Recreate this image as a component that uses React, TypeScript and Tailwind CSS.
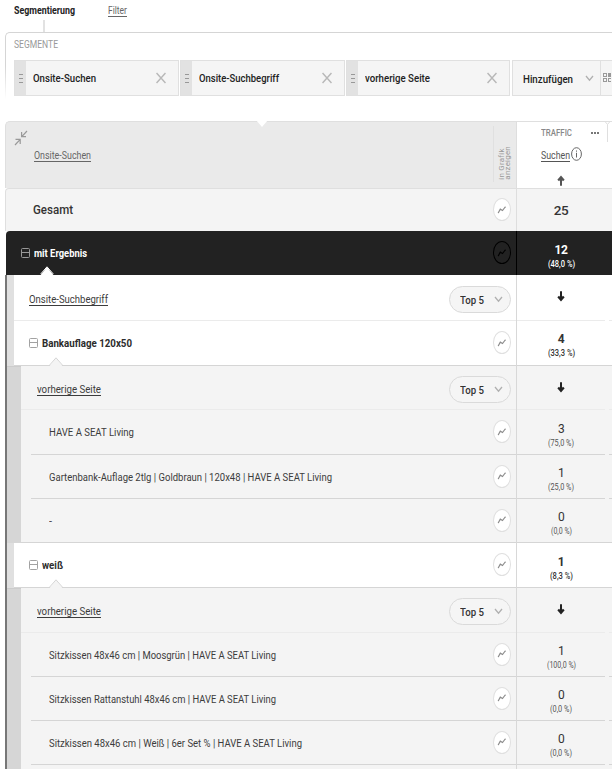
import { useLayoutEffect, useRef, type ReactNode } from 'react';

// Condenses or widens a label horizontally so that it occupies exactly `w` pixels.
function Fit({ w, className = '', line = false, children }: { w: number; className?: string; line?: boolean; children: ReactNode }) {
  const ref = useRef<HTMLSpanElement>(null);
  useLayoutEffect(() => {
    const el = ref.current;
    if (!el) return;
    el.style.transform = 'none';
    el.style.transform = `scaleX(${w / el.getBoundingClientRect().width})`;
  }, [w]);
  return (
    <span className={`flex shrink-0 ${line ? 'border-b border-current' : ''} ${className}`} style={{ width: w }}>
      <span ref={ref} className="block w-max shrink-0 origin-left whitespace-pre">{children}</span>
    </span>
  );
}

function ChartButton({ dark = false }: { dark?: boolean }) {
  return (
    <span className={`mb-px flex h-[23px] w-[18px] shrink-0 items-center justify-center rounded-[50%] border ${dark ? 'border-black text-black' : 'border-[#e0e0e0] bg-white text-[#8c8c8c]'}`}>
      <svg width="10" height="10" viewBox="0 0 10 10" fill="none" stroke="currentColor" strokeWidth="1.2">
        <path d="M1.2 8 L3.3 4.2 L5.5 5.5 L8.2 2" />
        <circle cx="1.4" cy="7.6" r=".55" fill="currentColor" stroke="none" />
        <circle cx="8.3" cy="2" r=".6" fill="currentColor" stroke="none" />
      </svg>
    </span>
  );
}

function Chevron() {
  return (
    <svg width="9" height="7" viewBox="0 0 9 7" fill="none" stroke="#b0b0b0" strokeWidth="1.3" className="shrink-0">
      <path d="M1 1 L4.5 5.2 L8 1" />
    </svg>
  );
}

function TopSelect({ shift = '' }: { shift?: string }) {
  return (
    <span className={`flex h-[27px] w-[62px] shrink-0 items-center justify-between rounded-full border border-[#dadada] bg-[#f5f5f5] pl-[10px] pr-[7px] text-[11.5px] text-[#333] ${shift}`}>
      <Fit w={24} className="pt-px font-medium">Top 5</Fit>
      <Chevron />
    </span>
  );
}

function Arrow({ up = false, color = '#222' }: { up?: boolean; color?: string }) {
  return (
    <svg width="8" height="11" viewBox="0 0 8 11" fill="none" stroke={color} strokeWidth="2" className={up ? 'rotate-180' : ''}>
      <path d="M4 .3 V9" />
      <path d="M1.2 5.6 L4 8.8 L6.8 5.6" strokeWidth="2.3" />
    </svg>
  );
}

function Toggle({ light = false }: { light?: boolean }) {
  return (
    <span className={`mb-px flex h-[10px] w-[9px] shrink-0 flex-col rounded-[1.5px] border ${light ? 'border-[#989898]' : 'border-[#a2a2a2]'}`}>
      <span className={`mt-[3px] h-px ${light ? 'bg-[#989898]' : 'bg-[#a2a2a2]'}`} />
    </span>
  );
}

function Notch({ className, fill, stroke }: { className: string; fill: string; stroke: string }) {
  return (
    <svg width="14" height="9" viewBox="0 0 14 9" className={`absolute ${className}`}>
      <path d="M1 8.5 L7 1 L13 8.5 V9 H1 Z" fill={fill} />
      <path d="M.5 8.2 L7 .8 L13.5 8.2" fill="none" stroke={stroke} />
    </svg>
  );
}

function Segment({ label, w, width }: { label: string; w: number; width: string }) {
  return (
    <div className={`flex h-9 shrink-0 ${width} border border-[#e0e0e0] bg-[#f5f5f5]`}>
      <div className="flex w-[11px] shrink-0 flex-col items-center justify-center gap-[3px] bg-[#e2e2e2]">
        <span className="h-px w-1 bg-[#989898]" />
        <span className="h-px w-1 bg-[#989898]" />
        <span className="h-px w-1 bg-[#989898]" />
      </div>
      <div className="flex flex-1 items-center justify-between pl-[7px] pr-[12px]">
        <Fit w={w} className="font-medium text-[#222]">{label}</Fit>
        <svg width="10" height="12" viewBox="0 0 10 12" stroke="#b8b8b8" strokeWidth="1.5">
          <path d="M.5 1 L9.5 11 M9.5 1 L.5 11" />
        </svg>
      </div>
    </div>
  );
}

type RowData = {
  kind: 'head' | 'group' | 'item';
  h: string;
  label: string;
  w: number;
  value?: string;
  percent?: string;
  pw?: number;
  shift?: string;
  top?: string;
  last?: boolean;
};

function Values({ value, percent, pw = 22, bold, top = 'pt-[11px]' }: { value?: string; percent?: string; pw?: number; bold?: boolean; top?: string }) {
  return (
    <div className={`flex h-full w-[88px] flex-col items-center ${top} ${bold ? 'font-bold' : ''}`}>
      <span className="block text-[12px] leading-[14px] tracking-[-0.5px]">{value}</span>
      <Fit w={pw} className={`text-[9px] leading-[14px] ${bold ? 'font-medium' : 'text-[#555]'}`}>{percent}</Fit>
    </div>
  );
}

function Row({ row, level }: { row: RowData; level: 1 | 2 }) {
  const { kind, last } = row;
  const indent = kind !== 'item' ? (level === 1 ? 'pl-[15px]' : 'pl-[16px]') : last ? 'pl-[28px]' : 'pl-[18px]';
  return (
    <div className={`relative flex ${row.h} ${level === 1 ? 'bg-white' : 'bg-[#f4f4f4]'}`}>
      <div className={`flex flex-1 ${kind === 'item' && !last ? 'pl-[10px]' : ''}`}>
        <div className={`flex flex-1 items-center border-b pr-[5px] ${indent} ${kind === 'head' ? 'border-[#ebebeb]' : 'border-[#d5d5d5]'}`}>
          {kind === 'group' && <><Toggle /><span className="w-[4px]" /></>}
          <Fit w={row.w} line={kind === 'head'} className={kind === 'head' ? 'mt-[3px] leading-[12px] text-[#3c3c3c]' : kind === 'group' ? 'mb-px font-bold text-[#2c2c2c]' : 'pb-px pt-px text-[#3c3c3c]'}>{row.label}</Fit>
          <span className="flex-1" />
          {kind === 'head' ? <TopSelect shift={row.shift} /> : <ChartButton />}
        </div>
      </div>
      <div className="w-px bg-[#d8d8d8]" />
      <div className={`flex w-[88px] shrink-0 justify-center border-b text-[#333] ${kind === 'head' ? 'border-[#ebebeb]' : 'border-[#d5d5d5]'}`}>
        {kind === 'head'
          ? <span className="pt-[16px]"><Arrow /></span>
          : <Values value={row.value} percent={row.percent} pw={row.pw} bold={kind === 'group'} top={row.top} />}
      </div>
      <div className={`w-[4px] ${kind === 'group' || last ? 'border-b border-[#d5d5d5]' : ''}`} />
      <div className={`w-[3px] border-b ${kind === 'head' ? 'border-[#ebebeb]' : 'border-[#d5d5d5]'}`} />
      {kind === 'group' && <Notch className="bottom-0 left-[35px]" fill="#f4f4f4" stroke="#d5d5d5" />}
    </div>
  );
}

const outer1: RowData[] = [
  { kind: 'head', h: 'h-[46px]', label: 'Onsite-Suchbegriff', w: 79, shift: 'mt-[4px]' },
  { kind: 'group', h: 'h-[45px]', label: 'Bankauflage 120x50', w: 90, value: '4', percent: '(33,3 %)', pw: 27 },
];
const inner1: RowData[] = [
  { kind: 'head', h: 'h-[44px]', label: 'vorherige Seite', w: 64, shift: 'mt-[4px]' },
  { kind: 'item', h: 'h-[45px]', label: 'HAVE A SEAT Living', w: 85, value: '3', percent: '(75,0 %)', pw: 26, top: 'pt-[12px]' },
  { kind: 'item', h: 'h-[44px]', label: 'Gartenbank-Auflage 2tlg | Goldbraun | 120x48 | HAVE A SEAT Living', w: 283, value: '1', percent: '(25,0 %)', pw: 26 },
  { kind: 'item', h: 'h-[44px]', label: '-', w: 3, value: '0', percent: '(0,0 %)', pw: 21, last: true },
];
const outer2: RowData[] = [
  { kind: 'group', h: 'h-[45px]', label: 'weiß', w: 21, value: '1', percent: '(8,3 %)', pw: 23, top: 'pt-[12px]' },
];
const inner2: RowData[] = [
  { kind: 'head', h: 'h-[45px]', label: 'vorherige Seite', w: 64, shift: 'mt-[2px]' },
  { kind: 'item', h: 'h-[44px]', label: 'Sitzkissen 48x46 cm | Moosgrün | HAVE A SEAT Living', w: 227, value: '1', percent: '(100,0 %)', pw: 29 },
  { kind: 'item', h: 'h-[44px]', label: 'Sitzkissen Rattanstuhl 48x46 cm | HAVE A SEAT Living', w: 227, value: '0', percent: '(0,0 %)', pw: 22 },
  { kind: 'item', h: 'h-[44px]', label: 'Sitzkissen 48x46 cm | Weiß | 6er Set % | HAVE A SEAT Living', w: 253, value: '0', percent: '(0,0 %)', pw: 22 },
];

function Group({ rows, level, tail = false }: { rows: RowData[]; level: 1 | 2; tail?: boolean }) {
  return (
    <div className="flex">
      <div className={level === 1 ? 'w-[7px] shrink-0 bg-[#e0e0e0]' : 'w-[14px] shrink-0 border-t border-[#cccccc] bg-[#d6d6d6]'} />
      <div className="flex-1">
        {rows.map((r, i) => <Row key={i} row={r} level={level} />)}
        {tail && (
          <div className="flex h-1 bg-[#f4f4f4]">
            <div className="flex-1" />
            <div className="mr-[95px] w-px bg-[#d8d8d8]" />
          </div>
        )}
      </div>
    </div>
  );
}

export default function App() {
  return (
    <div className="h-[769px] w-[612px] overflow-hidden bg-white font-['Roboto',sans-serif] text-[11.5px] leading-[14px] text-[#333]">
      <nav className="flex h-5 items-start gap-[33px] pl-[14px] pt-[3px]">
        <Fit w={61} className="font-bold text-[#222]">Segmentierung</Fit>
        <Fit w={19} line className="mt-px leading-[12px] text-[#666]">Filter</Fit>
      </nav>
      <div className="ml-[43px] h-3 w-[2px] bg-[#e2e2e2]" />
      <section className="relative ml-[5px] h-[89px] rounded-tl-[5px] border-l border-t border-[#d5d5d5] pl-2 pt-[5px]">
        <Fit w={44} className="text-[10.5px] text-[#999]">SEGMENTE</Fit>
        <div className="absolute bottom-0 left-[-1px] h-[55px] w-px bg-linear-to-b from-transparent to-white to-60%" />
        <div className="mt-2 flex w-max">
          <Segment label="Onsite-Suchen" w={63} width="mr-[1px] w-[165px]" />
          <Segment label="Onsite-Suchbegriff" w={80} width="mr-[1px] w-[165px]" />
          <Segment label="vorherige Seite" w={65} width="mr-[2px] w-[164px]" />
          <div className="flex h-9 w-[101px] border border-[#e0e0e0] bg-[#f5f5f5]">
            <div className="flex w-[88px] items-center justify-between border-r border-[#e0e0e0] pl-[10px] pr-[6px]">
              <Fit w={50} className="pt-px font-medium text-[#222]">Hinzufügen</Fit>
              <Chevron />
            </div>
            <svg width="10" height="34" viewBox="0 0 10 34" fill="none" stroke="#999">
              <rect x="2.5" y="12.5" width="3" height="3" />
              <rect x="7" y="12" width="4" height="4" fill="#999" stroke="none" />
              <rect x="2.5" y="17.5" width="3" height="3" />
              <rect x="7.5" y="17.5" width="3" height="3" />
            </svg>
          </div>
        </div>
      </section>
      <main className="ml-[5px]">
        <header className="relative flex h-[67px] rounded-tl-[5px] border-l border-t border-[#dfdfdf] bg-[#eaeaea]">
          <svg width="12" height="8" viewBox="0 0 12 8" className="absolute left-[250px] top-[-2px]"><path d="M0 0 H12 L6 7 Z" fill="white" /></svg>
          <div className="flex flex-1 pl-2 pt-2">
            <svg width="14" height="16" viewBox="0 0 14 16" fill="none" stroke="#999" strokeWidth="1.2">
              <path d="M13 1 L8 6.3 M7.6 2 V6.7 H12 M1 15 L5.8 9.8 M1.5 9.4 H6.2 V14" />
            </svg>
            <div className="ml-[6px] pt-[19px]"><Fit w={57} line className="leading-[12px] text-[#666]">Onsite-Suchen</Fit></div>
            <div className="flex-1" />
            <div className="-mt-1 flex h-[56px] w-[23px] items-end border-l border-[#e0e0e0] pb-[2px] pl-[5px]">
              <div className="w-[12px] rotate-180 text-[8px] leading-[6px] tracking-[0.2px] text-[#999] [writing-mode:vertical-rl]">in Grafik<br />anzeigen</div>
            </div>
          </div>
          <div className="flex w-[96px] border-l border-[#dedede] bg-white">
            <div className="flex w-[88px] flex-col items-center pt-1">
              <div className="relative flex w-full justify-center">
                <Fit w={31} className="-ml-[10px] text-[9.5px] font-medium text-[#888]">TRAFFIC</Fit>
                <span className="absolute right-[6px] top-[6px] flex gap-px"><i className="h-[2px] w-[2px] bg-[#777]" /><i className="h-[2px] w-[2px] bg-[#777]" /><i className="h-[2px] w-[2px] bg-[#777]" /></span>
              </div>
              <div className="mt-[7px] flex items-start gap-[1px]">
                <Fit w={29} line className="mt-[2px] leading-[12px] text-[#555]">Suchen</Fit>
                <svg width="11" height="14" viewBox="0 0 11 14" fill="none" stroke="#666"><ellipse cx="5.5" cy="7" rx="4.9" ry="6.3" /><path d="M5.5 5.8 V10.5 M5.5 3.5 V4.7" /></svg>
              </div>
              <span className="mt-[13px]"><Arrow up color="#555" /></span>
            </div>
            <svg width="7" height="22" viewBox="0 0 7 22" fill="none" stroke="#dfdfdf" className="-mt-px"><path d="M0 .5 L2.5 3.5 V21 M2.5 3.5 L5 .5" /></svg>
          </div>
        </header>
        <div className="flex h-[43px] rounded-tl-[4px] border-l border-t border-[#dfdfdf] bg-[#f4f4f4]">
          <div className="flex flex-1 items-center justify-between pl-[27px] pr-[5px]">
            <Fit w={40} className="mb-px text-[13px] font-medium">Gesamt</Fit><ChartButton />
          </div>
          <div className="flex w-[96px] items-center border-l border-[#dedede]"><span className="mb-px w-[88px] text-center text-[13.5px] font-medium tracking-[-0.4px]">25</span></div>
        </div>
        <div className="relative ml-px flex h-[44px] rounded-tl-[4px] bg-[#222] text-white">
          <div className="flex flex-1 items-center pl-[15px] pr-[5px]">
            <Toggle light /><Fit w={53} className="mb-px ml-[4px] font-bold">mit Ergebnis</Fit>
            <span className="flex-1" /><ChartButton dark />
          </div>
          <div className="w-[96px] border-l border-black"><Values value="12" percent="(48,0 %)" pw={27} bold top="pt-[12px]" /></div>
          <Notch className="bottom-0 left-[34px]" fill="white" stroke="white" />
        </div>
        <div className="border-l-2 border-[#777]">
          <Group rows={outer1} level={1} />
          <Group rows={inner1} level={2} />
          <Group rows={outer2} level={1} />
          <Group rows={inner2} level={2} tail />
        </div>
      </main>
    </div>
  );
}
